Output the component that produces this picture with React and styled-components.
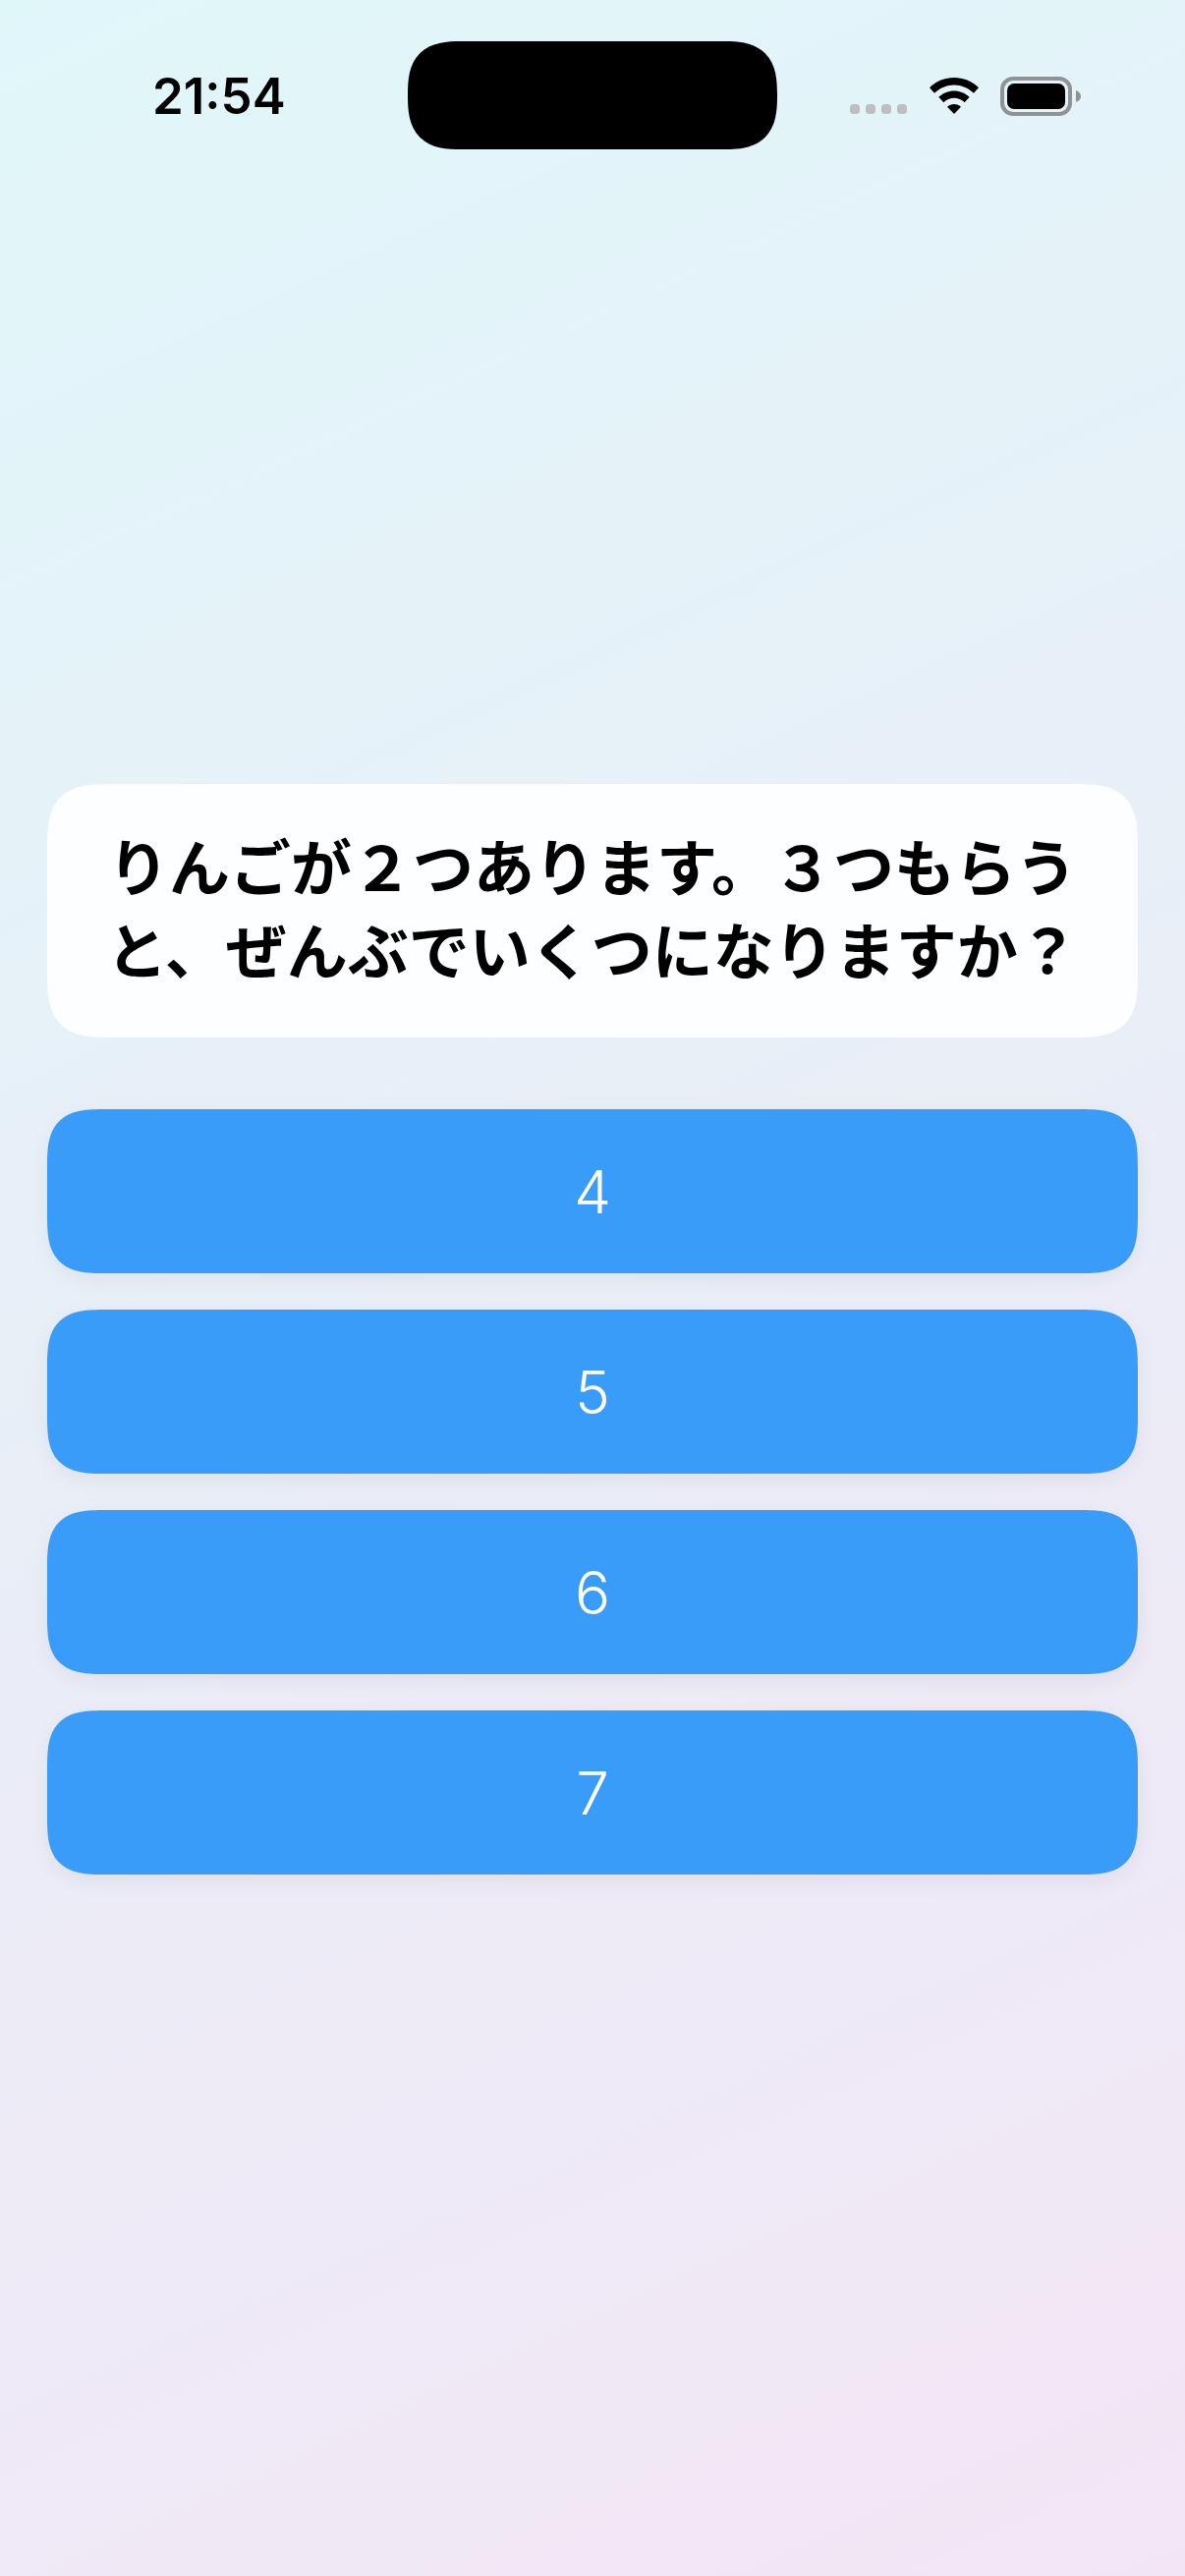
import React from "react";
import styled, { createGlobalStyle } from "styled-components";

const Global = createGlobalStyle`
  html, body { margin: 0; padding: 0; }
  body { width: 1206px; height: 2622px; overflow: hidden; }
`;

const Screen = styled.div`
  width: 1206px;
  height: 2622px;
  display: flex;
  flex-direction: column;
  background: linear-gradient(155.3deg, #e0f7fa 0%, #f3e5f5 100%);
  font-family: Inter, "Noto Sans CJK JP", sans-serif;
`;

const StatusBar = styled.header`
  height: 152px;
  padding: 42px 0 0 155px;
  box-sizing: border-box;
  display: flex;
  align-items: flex-start;
`;

const Time = styled.time`
  width: 133px;
  margin-top: 37px;
  font-size: 51px;
  line-height: 37px;
  font-weight: 600;
  letter-spacing: 0;
  color: #000;
  white-space: nowrap;
`;

const Island = styled.div`
  width: 376px;
  height: 110px;
  margin-left: 127px;
  background: #000;
  border-radius: 55px;
  corner-shape: superellipse(1.45);
`;

const Indicators = styled.div`
  margin-left: 74px;
  margin-top: 36px;
  display: flex;
  align-items: flex-start;
`;

const SignalDots = styled.div`
  display: flex;
  gap: 6px;
  margin-top: 28px;
`;

const Dot = styled.span`
  width: 10px;
  height: 10px;
  border-radius: 3.5px;
  background: #bcc0c3;
`;

const WifiIcon = styled.svg`
  display: block;
  width: 50px;
  height: 37px;
  margin-left: 23px;
  margin-top: 1px;
`;

const BatteryIcon = styled.svg`
  display: block;
  width: 84px;
  height: 41px;
  margin-left: 22px;
`;

const Content = styled.main`
  padding: 646px 48px 0;
  display: flex;
  flex-direction: column;
`;

const QuestionCard = styled.section`
  height: 258px;
  box-sizing: border-box;
  display: flex;
  align-items: center;
  justify-content: center;
  background: rgba(255, 255, 255, 0.9);
  border-radius: 66px;
  corner-shape: superellipse(1.6);
`;

const QuestionText = styled.h1`
  margin: -8px 0 0;
  width: 1000px;
  text-align: center;
  font-family: "Noto Sans CJK JP", sans-serif;
  font-size: 62px;
  line-height: 85px;
  font-weight: 700;
  color: #000;
`;

const Answers = styled.div`
  margin-top: 73px;
  display: flex;
  flex-direction: column;
  gap: 37px;
`;

const AnswerButton = styled.button`
  height: 167px;
  border: 0;
  padding: 0;
  background: #399cf9;
  border-radius: 60px;
  corner-shape: superellipse(1.6);
  box-shadow: 0 6px 24px rgba(0, 0, 0, 0.06);
  color: #fff;
  font-family: Inter, sans-serif;
  font-size: 60px;
  font-weight: 350;
  line-height: 1;
`;

const answers = ["4", "5", "6", "7"];

export default function App() {
  return (
    <Screen>
      <Global />
      <StatusBar>
        <Time>21:54</Time>
        <Island />
        <Indicators>
          <SignalDots>
            <Dot /><Dot /><Dot /><Dot />
          </SignalDots>
          <WifiIcon viewBox="0 0 50 37">
            <path d="M25 0C15.5 0 7 3.6 0 10.2l5 5.6C10.8 10.4 17.6 7.4 25 7.4s14.2 3 20 8.4l5-5.6C43 3.6 34.500 0 25 0z" />
            <path d="M25 13.400c-6 0-11.500 2.300-15.700 6.300l5 5.600c3-2.800 6.700-4.500 10.700-4.500s7.700 1.700 10.700 4.500l5-5.600c-4.200-4-9.700-6.300-15.700-6.300z" />
            <path d="M25 27c-2.700 0-5.100 1-7 2.700L25 37l7-7.300c-1.900-1.700-4.300-2.700-7-2.700z" />
          </WifiIcon>
          <BatteryIcon viewBox="0 0 84 41">
            <rect x="2" y="2" width="69" height="36" rx="11" fill="none" stroke="#8f9396" strokeWidth="4" />
            <rect x="7" y="7" width="59" height="26" rx="7" fill="#000" />
            <path d="M77 14c3 1 5 3 5 6s-2 5-5 6z" fill="#8f9396" />
          </BatteryIcon>
        </Indicators>
      </StatusBar>
      <Content>
        <QuestionCard>
          <QuestionText>りんごが２つあります。３つもらうと、ぜんぶでいくつになりますか？</QuestionText>
        </QuestionCard>
        <Answers>
          {answers.map((a) => (
            <AnswerButton key={a}>{a}</AnswerButton>
          ))}
        </Answers>
      </Content>
    </Screen>
  );
}
